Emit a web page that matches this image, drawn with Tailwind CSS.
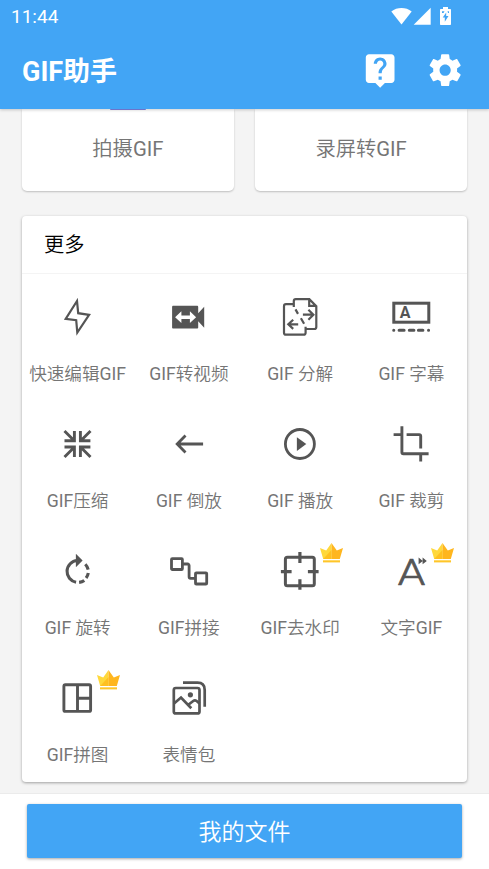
<!DOCTYPE html>
<html lang="zh-CN">
<head>
<meta charset="utf-8">
<title>GIF助手</title>
<script src="https://cdn.jsdelivr.net/npm/@tailwindcss/browser@4"></script>
</head>
<body class="w-[489px] h-[869px] overflow-hidden bg-[#f4f4f4] font-[Roboto,'Noto_Sans_CJK_SC',sans-serif] flex flex-col">
<header class="relative z-10 h-[108.5px] shrink-0 bg-[#42a5f5] text-white shadow-[0_1px_3px_rgba(0,0,0,0.2)]">
  <div class="h-8 flex items-center justify-between pl-[11px] pr-[38px]">
    <span class="text-[19px] leading-8 pt-[2px]">11:44</span>
    <div class="flex items-center">
      <svg class="w-[21px] h-[18px]" viewBox="0 0 21 18" fill="#fff"><path d="M10.5 17.5 .3 4.4C3.3 2 6.8.9 10.5.9s7.200 1.100 10.200 3.500z"/></svg>
      <svg class="w-[18px] h-[18px] ml-[1px]" viewBox="0 0 18 18" fill="#fff"><path d="M.7 17.700 17.700.7v17z"/></svg>
      <svg class="w-[11px] h-[18px] ml-[9px]" viewBox="0 0 11 18"><path fill="#fff" d="M3 0h5v2h2c.6 0 1 .4 1 1v14c0 .6-.4 1-1 1H1c-.6 0-1-.4-1-1V3c0-.6.4-1 1-1h2z"/><path fill="#42a5f5" d="M6.200 5.500v3.600h2.300l-3.700 5.700v-4.200H2.700zM2 4.300h2.500l-1 1.700H2zM7.500 4.300H9V6H8z"/></svg>
    </div>
  </div>
  <div class="h-[76px] flex items-center pl-[22px] pr-[24.700px]">
    <h1 class="text-[27px] font-bold leading-none grow pt-[5px]">GIF助手</h1>
    <svg class="w-[38.300px] h-[38.300px] mt-[1px]" viewBox="0 0 24 24" fill="#fff"><path d="M19 2H5c-1.110 0-2 .9-2 2v14c0 1.100.89 2 2 2h4l3 3 3-3h4c1.100 0 2-.9 2-2V4c0-1.100-.9-2-2-2zm-6 16h-2v-2h2v2zm2.070-7.750l-.9.92C13.450 11.900 13 12.500 13 14h-2v-.5c0-1.100.45-2.100 1.170-2.830l1.240-1.260c.37-.36.59-.86.59-1.410 0-1.100-.9-2-2-2s-2 .9-2 2H8c0-2.210 1.790-4 4-4s4 1.790 4 4c0 .88-.36 1.680-.93 2.250z"/></svg>
    <svg class="w-[38.300px] h-[38.300px] mt-[1px] ml-[26.700px]" viewBox="0 0 24 24" fill="#fff"><path d="M19.430 12.980c.04-.32.07-.64.07-.98s-.03-.66-.07-.98l2.110-1.650c.19-.15.24-.42.12-.64l-2-3.460c-.12-.22-.39-.3-.61-.22l-2.490 1c-.52-.4-1.080-.73-1.690-.98l-.38-2.650C14.460 2.180 14.250 2 14 2h-4c-.25 0-.46.18-.49.42l-.38 2.650c-.61.25-1.170.59-1.690.98l-2.490-1c-.23-.09-.49 0-.61.22l-2 3.460c-.13.22-.07.49.12.64l2.110 1.650c-.04.32-.07.65-.07.98s.03.66.07.98l-2.110 1.650c-.19.15-.24.42-.12.64l2 3.460c.12.22.39.3.61.22l2.490-1c.52.4 1.080.73 1.690.98l.38 2.650c.03.24.24.42.49.42h4c.25 0 .46-.18.49-.42l.38-2.650c.61-.25 1.170-.59 1.690-.98l2.490 1c.23.09.49 0 .61-.22l2-3.460c.12-.22.07-.49-.12-.64l-2.110-1.650zM12 15.500c-1.930 0-3.500-1.570-3.500-3.500s1.570-3.500 3.500-3.500 3.500 1.570 3.500 3.500-1.570 3.500-3.500 3.500z"/></svg>
  </div>
</header>

<main class="grow px-[22px] min-h-0">
  <div class="grid grid-cols-2 gap-[21.500px] h-[82.500px] text-[20.300px] text-[#757575] text-center">
    <section class="bg-white rounded-b-[5px] shadow-[0_1px_2px_rgba(0,0,0,0.22)] flex flex-col items-center">
      <div class="w-[36px] h-[1.500px] bg-[#7d83e6] rounded-b-sm"></div>
      <div class="mt-[23.500px] leading-[30px] font-[350]">拍摄<span class="font-normal">GIF</span></div>
    </section>
    <section class="bg-white rounded-b-[5px] shadow-[0_1px_2px_rgba(0,0,0,0.22)]">
      <div class="mt-[25px] leading-[30px] font-[350]">录屏转<span class="font-normal">GIF</span></div>
    </section>
  </div>

  <section class="mt-[25px] h-[566px] bg-white rounded-[4px] shadow-[0_1px_3px_rgba(0,0,0,0.35)]">
    <h2 class="h-[57.600px] border-b border-[#f4f4f4] pl-[22px] text-[20.300px] leading-[59px] font-[350] text-black">更多</h2>
    <div class="grid grid-cols-4 auto-rows-[127.200px] text-[17.600px] leading-6 font-[350] text-[#757575] text-center whitespace-nowrap [&_svg]:mx-auto [&_svg]:mb-[21px] [&>div]:pt-[19.100px] [&>div]:relative">
      <div>
        <svg class="w-12 h-12 -translate-x-[0.5px]" viewBox="0 0 48 48" fill="none" stroke="#555" stroke-width="2.200"><path d="M23.500 8 12.200 25.800 22.700 27.200 23.800 39.500 35.600 21.800 24.700 20.200z"/></svg>
        快速编辑<span class="font-normal">GIF</span>
      </div>
      <div>
        <svg class="w-12 h-12" viewBox="0 0 48 48"><path fill="#555" d="M8.300 12.700H32c.7 0 1.200.5 1.200 1.200v6.400l6-6.500v20.900l-6-6.500v6.200c0 .7-.5 1.200-1.200 1.200H8.300c-.7 0-1.200-.5-1.200-1.200V13.900c0-.7.5-1.200 1.200-1.200z"/><path fill="#fff" d="M10.100 24.200l6.300-5.900v4.200h8.500v-4.200l6.200 5.900-6.200 5.900v-4.200h-8.500v4.200z"/></svg>
        <span class="font-normal">GIF</span>转视频
      </div>
      <div>
        <svg class="w-12 h-12" viewBox="0 0 48 48" fill="none" stroke="#555" stroke-width="2.200"><path d="M17.800 14v-2.800H10a2 2 0 0 0-2 2v26.500a2 2 0 0 0 2 2h17.600a2 2 0 0 0 2-2v-6M17.800 12V8.100a2 2 0 0 1 2-2h13.500l7 7V34a2 2 0 0 1-2 2H30M33.200 6v6.800h7M19.500 16.400l2.500 4.500M24.900 25.200l3.200 5.600M26.900 21.700h10.200M32.400 16.700l5 5-5 5M22.200 31.300H12.500M17.200 26.700l-4.900 4.600 4.900 4.600"/></svg>
        <span class="font-normal">GIF</span> 分解
      </div>
      <div>
        <svg class="w-12 h-12" viewBox="0 0 48 48" fill="none" stroke="#555" stroke-width="3"><rect x="6.800" y="10.200" width="35" height="19"/><path stroke-linecap="round" d="M6.700 37.200h.1M12.100 37.200h5M22.300 37.200h4.600M31.400 37.200h4.500M41.500 37.200h.1"/><text x="18" y="25.200" text-anchor="middle" font-family="Roboto" font-size="16" font-weight="700" fill="#555" stroke="none">A</text></svg>
        <span class="font-normal">GIF</span> 字幕
      </div>

      <div>
        <svg class="w-12 h-12 -translate-x-[0.5px]" viewBox="0 0 48 48" fill="none" stroke="#555" stroke-width="2.900"><path d="M20.900 11v9.800H11M11 11l9.500 9.500M26.900 11v9.800h10M37 11l-9.500 9.500M20.900 37v-10H11M11 37l9.500-9.500M26.900 37v-10h10M37 37l-9.500-9.500"/></svg>
        <span class="font-normal">GIF</span>压缩
      </div>
      <div>
        <svg class="w-12 h-12" viewBox="0 0 48 48" fill="none" stroke="#555" stroke-width="2.800"><path d="M38.100 24H12.500M20.500 15.600 12.200 24l8.300 8.400"/></svg>
        <span class="font-normal">GIF</span> 倒放
      </div>
      <div>
        <svg class="w-12 h-12" viewBox="0 0 48 48"><circle cx="23.900" cy="24" r="14.500" fill="none" stroke="#555" stroke-width="2.800"/><path fill="#555" d="M20.900 17.200v13.800l9.400-6.900z"/></svg>
        <span class="font-normal">GIF</span> 播放
      </div>
      <div>
        <svg class="w-12 h-12" viewBox="0 0 48 48" fill="none" stroke="#555" stroke-width="2.900"><path d="M14.900 6.300v25.900a1.500 1.500 0 0 0 1.500 1.500h25.200M6.600 14.600h8.300M19.600 14.600h12.600a1.500 1.500 0 0 1 1.500 1.500v12.400M33.700 34v7.400"/></svg>
        <span class="font-normal">GIF</span> 裁剪
      </div>

      <div>
        <svg class="w-12 h-12 -translate-x-[0.5px]" viewBox="0 0 48 48" fill="none" stroke="#555" stroke-width="3.100"><path d="M23.800 13.500A11 11 0 0 0 22.600 35.300M31.800 17.200Q34 19.500 34.700 22.600M34.800 26.100Q34.400 28.500 32.600 31M25.600 35.400Q28.600 35 30.800 33.400"/><path fill="#555" stroke="none" d="M22.400 6.800v13.400l6.700-6.600z"/></svg>
        <span class="font-normal">GIF</span> 旋转
      </div>
      <div>
        <svg class="w-12 h-12" viewBox="0 0 48 48" fill="none" stroke="#555" stroke-width="2.800"><rect x="6.500" y="11.600" width="10.900" height="10.900" rx=".8"/><rect x="30.500" y="25.800" width="11.200" height="11.200" rx=".8"/><path d="M18 17h4.600a1.500 1.500 0 0 1 1.500 1.500v11.300a1.500 1.500 0 0 0 1.500 1.500H30"/></svg>
        <span class="font-normal">GIF</span>拼接
      </div>
      <div>
        <svg class="w-12 h-12" viewBox="0 0 48 48" fill="none" stroke="#555" stroke-width="3"><rect x="9.400" y="10.200" width="28.900" height="28.600" rx="2"/><path stroke-width="3.200" d="M23.900 5v11M23.900 32.300v10.500M4.900 24.600h10.700M31.900 24.600h10.700"/></svg>
        <span class="font-normal">GIF</span>去水印
        <span class="absolute left-[75.200px] top-[14.700px]"><svg class="w-[23px] h-5" viewBox="0 0 23 20"><path fill="#ffd83b" d="M0 5l6.200 2.500L11.500 0v16H3.200z"/><path fill="#ffb61e" d="M23 5l-6.200 2.500L11.500 0v16h8.300z"/><path fill="#ffc020" d="M11.500 16H3.200L11.500 7z"/><path fill="#ffc629" d="M3 17.300h17v2.100H3z"/></svg></span>
      </div>
      <div>
        <svg class="w-12 h-12" viewBox="0 0 48 48"><text x="24.400" y="37.500" text-anchor="middle" font-family="Roboto" font-size="37.500" font-weight="300" textLength="27.500" lengthAdjust="spacingAndGlyphs" fill="#555" stroke="#555" stroke-width=".7" stroke-linejoin="round">A</text><path fill="#555" d="M31.600 10.500l4.200 3.400-4.200 3.400zM35.600 10.500l4.200 3.400-4.200 3.400z"/></svg>
        文字<span class="font-normal">GIF</span>
        <span class="absolute left-[75.200px] top-[14.700px]"><svg class="w-[23px] h-5" viewBox="0 0 23 20"><path fill="#ffd83b" d="M0 5l6.200 2.500L11.500 0v16H3.200z"/><path fill="#ffb61e" d="M23 5l-6.200 2.500L11.500 0v16h8.300z"/><path fill="#ffc020" d="M11.500 16H3.200L11.500 7z"/><path fill="#ffc629" d="M3 17.300h17v2.100H3z"/></svg></span>
      </div>

      <div>
        <svg class="w-12 h-12 -translate-x-[0.5px]" viewBox="0 0 48 48" fill="none" stroke="#555" stroke-width="2.900"><rect x="10.400" y="10.700" width="26.700" height="26.700" rx="1.500"/><path d="M24 10.700v26.700M24 24.200h13"/></svg>
        <span class="font-normal">GIF</span>拼图
        <span class="absolute left-[75.200px] top-[14.700px]"><svg class="w-[23px] h-5" viewBox="0 0 23 20"><path fill="#ffd83b" d="M0 5l6.200 2.500L11.500 0v16H3.200z"/><path fill="#ffb61e" d="M23 5l-6.200 2.500L11.500 0v16h8.300z"/><path fill="#ffc020" d="M11.500 16H3.200L11.500 7z"/><path fill="#ffc629" d="M3 17.300h17v2.100H3z"/></svg></span>
      </div>
      <div>
        <svg class="w-12 h-12" viewBox="0 0 48 48" fill="none" stroke="#555" stroke-width="2.700"><rect x="8.800" y="14" width="25.700" height="25.400" rx="2"/><path d="M18 8.700h14.500q7.200 0 7.200 7.300v16.700M9 29.500l7-6 10.300 10.800M22.700 31.300l5.500-4.300q1.700-1.300 3.400 0l2.900 2.400"/><circle cx="25.400" cy="20.800" r="2.600" fill="#555" stroke="none"/></svg>
        表情包
      </div>
    </div>
  </section>
</main>

<footer class="h-[76.500px] shrink-0 bg-white border-t border-[#ebebeb] px-[27px] pt-[10.500px] relative">
  <button class="block w-full h-[54px] rounded-[2px] bg-[#42a5f5] text-white text-[23px] leading-[57px] font-[350] shadow-[0_1px_3px_rgba(0,0,0,0.35)]">我的文件</button>
</footer>
</body>
</html>
